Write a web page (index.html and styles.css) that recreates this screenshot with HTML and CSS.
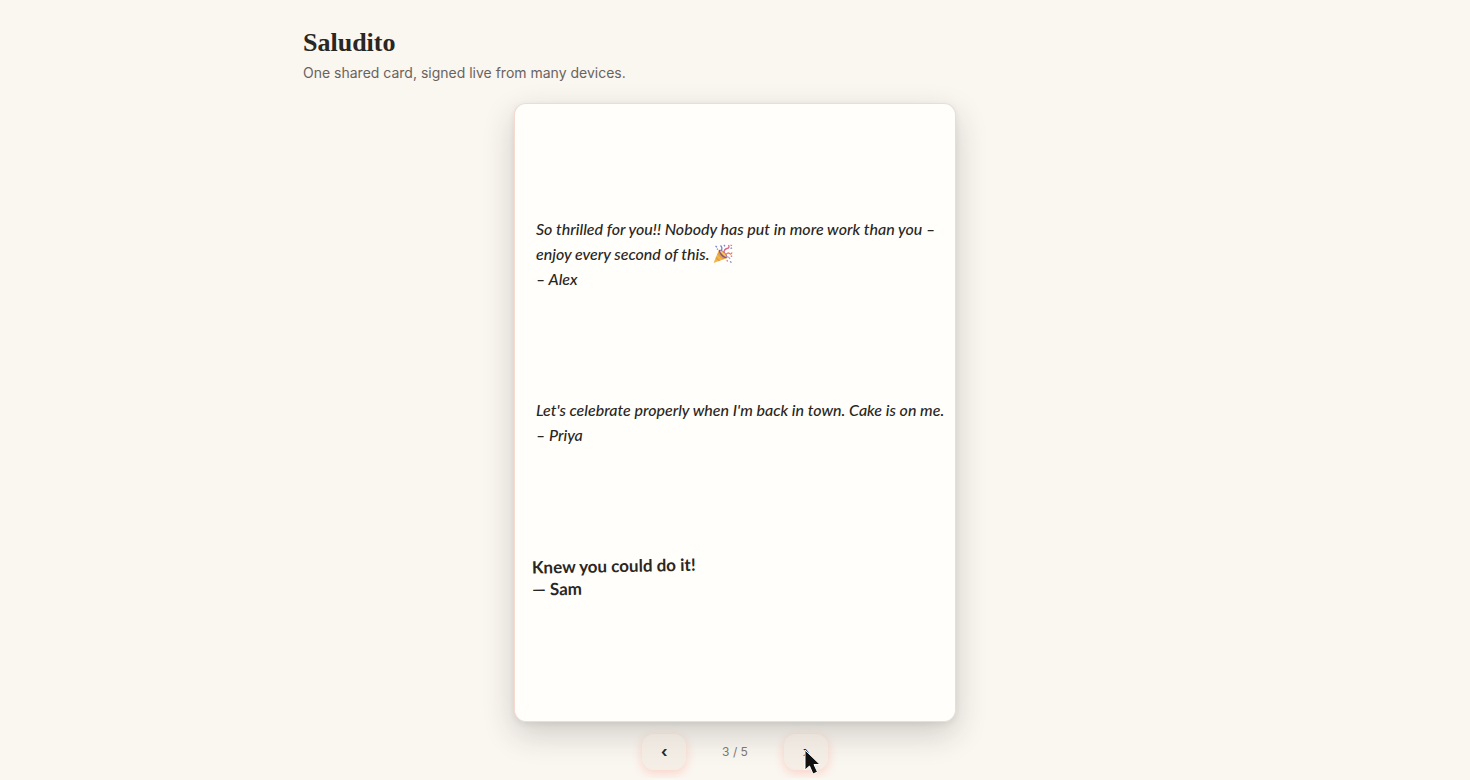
FILE: index.html
```html
<!DOCTYPE html>
<html lang="en">
<head>
  <meta charset="UTF-8">
  <meta name="viewport" content="width=device-width, initial-scale=1.0">
  <title>Saludito</title>
  <link rel="stylesheet" href="styles.css">
</head>
<body>
  <div class="page">
    <header class="header">
      <h1 class="title">Saludito</h1>
      <p class="subtitle">One shared card, signed live from many devices.</p>
    </header>

    <!-- Current card page -->
    <main class="card">
      <p class="note">So thrilled for you!! Nobody has put in more work than you – enjoy every second of this.
        <svg class="emoji" viewBox="0 0 20 20" role="img" aria-label="Party popper">
          <path d="M6 6 14 14 1.2 18.8Q.6 18.7.9 18Z" fill="#f3b83f"/>
          <path d="M5.2 8.2 11.8 14.8 9.6 15.6 4.4 10.4ZM3.4 12.5 7.4 16.5 5.6 17.2 2.6 14.4Z" fill="#e5a04f"/>
          <ellipse cx="10" cy="10" rx="2.3" ry="5.6" transform="rotate(-45 10 10)" fill="#8d5482"/>
          <ellipse cx="10.3" cy="9.7" rx="1.2" ry="4.2" transform="rotate(-45 10.3 9.7)" fill="#f5c94f"/>
          <path d="M8 7Q10 4 7.5 1.5" fill="none" stroke="#6b87d6" stroke-width="1.3"/>
          <path d="M11 9Q11 5 14 4.5T15.5 1" fill="none" stroke="#d86c89" stroke-width="1.3"/>
          <path d="M12.5 11Q15 8 16.5 9.5T19 8.5" fill="none" stroke="#e78063" stroke-width="1.3"/>
          <path d="M13 13Q16 12 17 15" fill="none" stroke="#b1a0cc" stroke-width="1.2"/>
          <path d="M2.5 2 4 3.2M11 1 12 2.3M17.5 4.5 19 3.8M17 17.5 18.5 18.5M4 5.5 5 4.8" stroke="#7b83cc" stroke-width="1.3"/>
          <path d="M17.5 1 19 1.8M14 16 14.5 17.5M17.8 12 19.2 12.3" stroke="#df7489" stroke-width="1.3"/>
        </svg>
        <br>– Alex</p>
      <p class="note">Let's celebrate properly when I'm back in town. Cake is on me.<br>– Priya</p>
      <p class="note note-print">Knew you could do it!<br>— Sam</p>
    </main>

    <nav class="pager" aria-label="Card pages">
      <button class="pager-button" type="button" aria-label="Previous page">‹</button>
      <span class="pager-count">3 / 5</span>
      <button class="pager-button" type="button" aria-label="Next page">›
        <svg class="cursor" viewBox="0 0 18 26" aria-hidden="true">
          <path d="M2 1V21L6.5 17 10 25 14.5 23 11 15.5H17Z"/>
        </svg>
      </button>
    </nav>
  </div>
</body>
</html>
```
FILE: styles.css
```css
* {
  box-sizing: border-box;
}

body {
  margin: 0;
  background-color: #faf6f0;
  color: #292623;
  font-family: Inter, sans-serif;
}

.page {
  max-width: 896px;
  margin: 0 auto;
  padding: 26px 16px 8px;
}

.title {
  margin: 0;
  font-family: "Liberation Serif", serif;
  font-size: 26px;
  font-weight: bold;
  line-height: 34px;
}

.subtitle {
  margin: 2px 0 20px;
  color: #69635e;
  font-size: 14px;
  line-height: 21px;
}

.card {
  display: flex;
  flex-direction: column;
  justify-content: center;
  gap: 106px;
  width: 100%;
  max-width: 442px;
  aspect-ratio: 5 / 7;
  margin: 0 auto;
  padding: 0 8px 12px 21px;
  background-color: #fffefa;
  border: 1px solid #e4dfda;
  border-left-color: #f6d9cf;
  border-radius: 12px;
  box-shadow: 0 12px 32px rgba(41, 38, 35, 0.2), 0 2px 6px rgba(41, 38, 35, 0.08);
}

.note {
  margin: 0;
  font-family: Lato, sans-serif;
  font-size: 16px;
  font-style: italic;
  font-weight: 500;
  line-height: 25px;
}

.note-print {
  font-size: 17px;
  font-style: normal;
  font-weight: bold;
  line-height: 22px;
  margin-left: -4px;
  transform: rotate(-1deg);
}

.emoji {
  width: 20px;
  height: 20px;
  vertical-align: -4px;
}

/* Page navigation */
.pager {
  display: flex;
  align-items: center;
  justify-content: center;
  gap: 36px;
  margin-top: 12px;
}

.pager-button {
  position: relative;
  width: 44px;
  height: 36px;
  padding: 0;
  border: none;
  border-radius: 12px;
  background-color: rgba(240, 230, 220, 0.5);
  box-shadow: 0 3px 10px rgba(255, 120, 95, 0.28);
  color: #292623;
  font-family: Inter, sans-serif;
  font-size: 15px;
  font-weight: bold;
  cursor: pointer;
}

.pager-count {
  color: #7d7771;
  font-size: 12px;
}

.cursor {
  position: absolute;
  top: 15px;
  left: 19px;
  width: 18px;
  height: 26px;
  fill: #111;
  stroke: #fff;
  stroke-width: 1;
}
```
